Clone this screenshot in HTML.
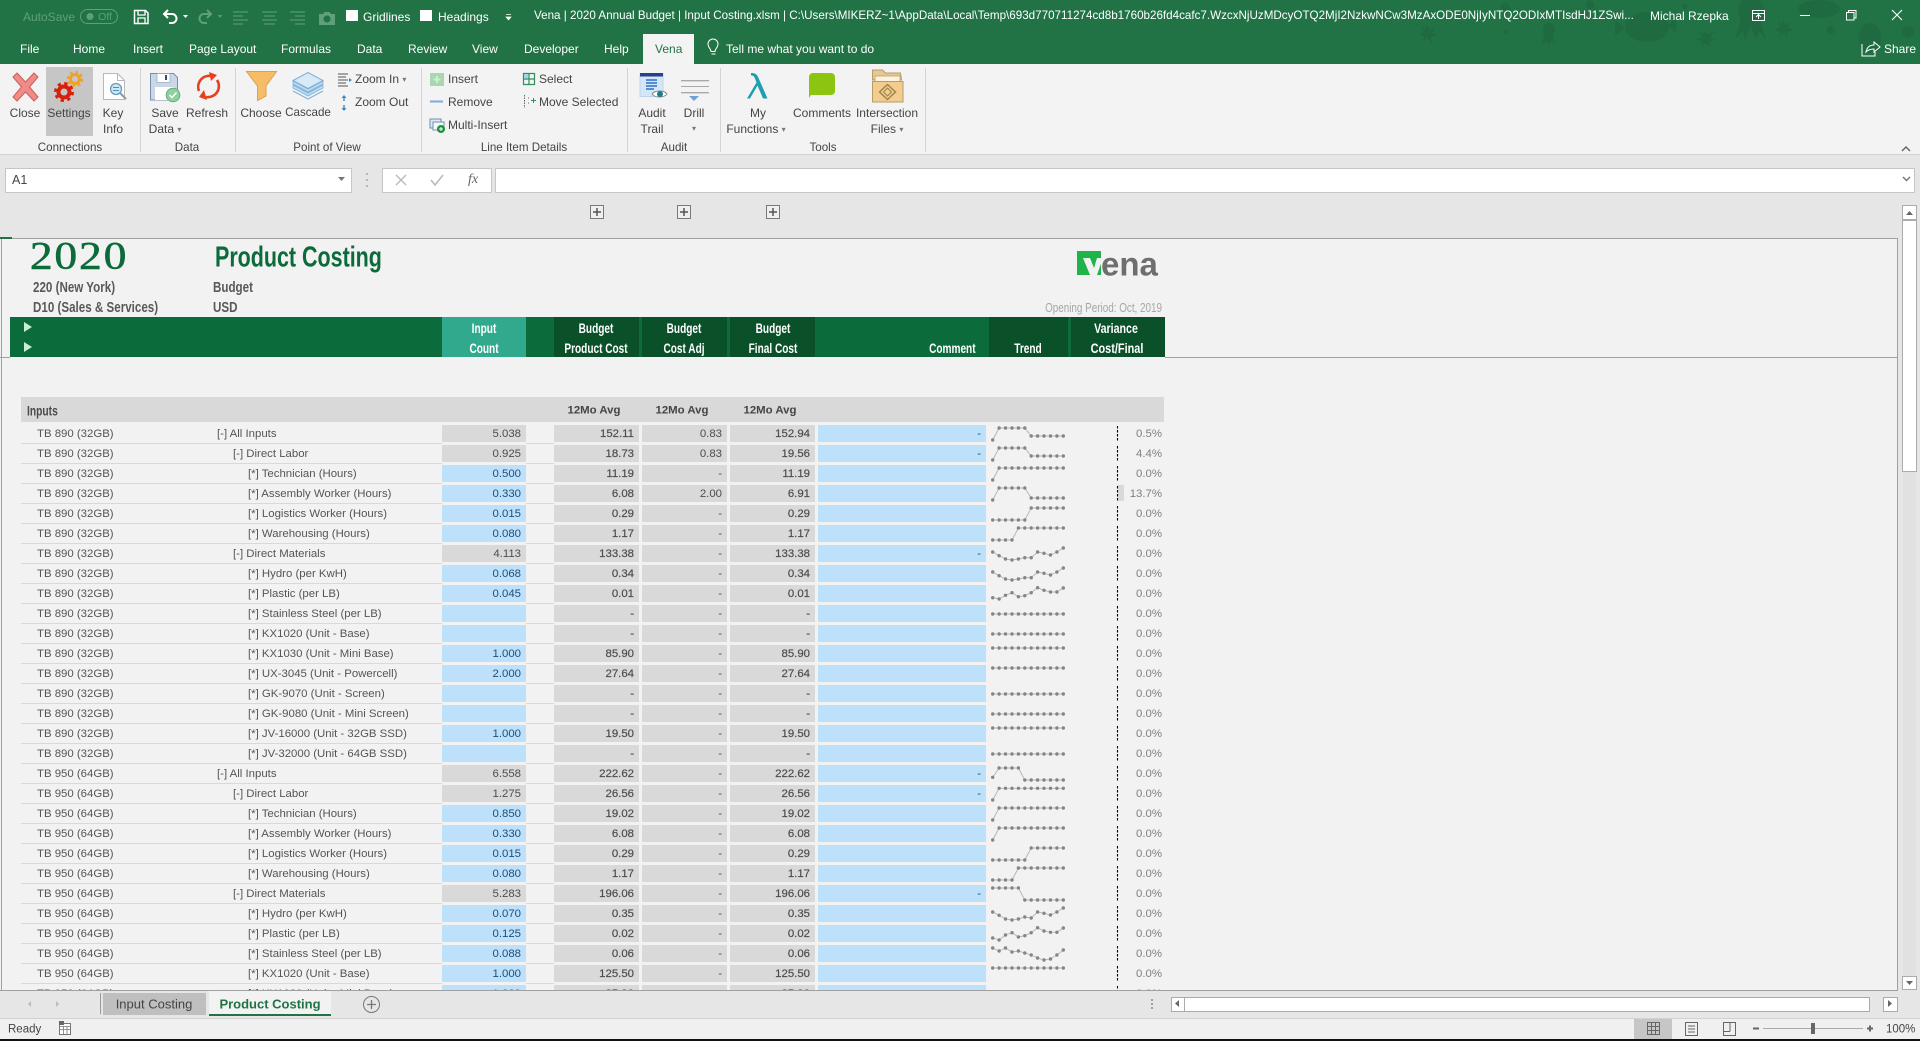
<!DOCTYPE html>
<html><head><meta charset="utf-8"><title>Vena</title>
<style>
html,body{margin:0;padding:0;width:1920px;height:1041px;overflow:hidden;background:#e6e6e6;font-family:"Liberation Sans",sans-serif;font-size:12px;color:#444}
.p{position:absolute}
.t{position:absolute;white-space:nowrap;transform:translateY(-50%);line-height:1}
.c{position:absolute;white-space:nowrap;transform:translate(-50%,-50%);line-height:1}
.w{color:#fff}
.n{font-weight:bold}
.t.n{transform:translateY(-50%) scaleX(var(--x,.8));transform-origin:0 50%}
.t.n.e{transform-origin:100% 50%}
.c.n{transform:translate(-50%,-50%) scaleX(var(--x,.72))}
.ar{font-size:8px;color:#777;vertical-align:1px}
#sh{position:absolute;left:0;top:238px;width:1897px;height:752px;overflow:hidden;background:#f2f2f2}
#in{position:absolute;left:0;top:-238px;width:1897px;height:1040px}
.r{position:absolute;left:0;width:1170px;height:20px;font-size:11.4px;color:#555}
.r u{position:absolute;left:21px;width:421px;top:19px;height:1px;background:#d9d9d9}
.r s{position:absolute;left:526px;width:28px;top:19px;height:1px;background:#d9d9d9}
.r b,.r i{position:absolute;font-weight:normal;font-style:normal;white-space:nowrap;line-height:20px;top:0}
.a{left:37px}.l0{left:217px}.l1{left:233px}.l2{left:248px}
.r i{top:1px;height:17px;text-align:right;padding-right:5px;box-sizing:border-box;line-height:19px}
.k{left:442px;width:84px}.m{left:554px;width:85px}.o{left:642px;width:85px}.q{left:730px;width:85px}.y{left:818px;width:168px}
.v{left:1120px;width:47px;color:#808080}
.g{background:#d9d9d9;color:#4d4d4d}.h{background:#bde0fb;color:#1f4e79}
.m,.q{-webkit-text-stroke:.2px #4d4d4d}
.sp polyline{fill:none;stroke:#b4b4b4;stroke-width:.9;marker-start:url(#m);marker-mid:url(#m);marker-end:url(#m)}
.hd{position:absolute;top:317px;height:40px}
</style></head><body>

<div class="p" style="left:0;top:0;width:1920px;height:64px;background:#217346"></div>
<div class="p" style="left:643px;top:34px;width:51px;height:30px;background:#f3f3f3"></div>
<div class="p" style="left:0;top:64px;width:1920px;height:90px;background:#f3f3f3;border-bottom:1px solid #d2d2d2"></div>
<div class="p" style="left:46px;top:67px;width:47px;height:69px;background:#c6c6c6"></div>
<div class="p" style="left:5px;top:168px;width:345px;height:23px;background:#fff;border:1px solid #c6c6c6"></div>
<div class="p" style="left:382px;top:168px;width:108px;height:23px;background:#fff;border:1px solid #c6c6c6"></div>
<div class="p" style="left:495px;top:168px;width:1418px;height:23px;background:#fff;border:1px solid #c6c6c6"></div>

<svg class="p" style="left:0;top:0" width="1920" height="1041" viewBox="0 0 1920 1041" fill="none">
<g fill="#1f6a41">
<ellipse cx="1647" cy="27" rx="22" ry="15"/><path d="M1625 28l-10-8v16zM1668 25l8-6v14z"/>
<ellipse cx="1751" cy="11" rx="13" ry="14"/><path d="M1741 20l-6 19 8-8 2 9 6-14 5 14 3-9 7 8-6-19z"/>
<ellipse cx="1819" cy="9" rx="21" ry="9"/><ellipse cx="1870" cy="38" rx="11" ry="15"/>
<ellipse cx="1549" cy="30" rx="6" ry="7"/><path d="M1544 34l-2 11 4-4 3 4 3-4 3 4-2-11z"/>
<path d="M1427 24l3 6 5-3-3 6 6 2-7 2 1 6-5-5-4 4 1-6-6-1 6-3-3-5 5 2z"/>
<path d="M1705 30l3 5 5-3-3 6 6 2-7 2 1 5-5-4-4 4 1-6-6-1 6-3-3-5 5 2z"/>
<path d="M1783 20l3 5 5-3-3 6 6 2-7 2 1 5-5-4-4 4 1-6-6-1 6-3-3-5 5 2z"/>
<circle cx="1831" cy="30" r="4"/><circle cx="1505" cy="8" r="5"/><circle cx="1590" cy="5" r="4"/><circle cx="1685" cy="6" r="3"/><circle cx="1908" cy="32" r="6"/><circle cx="1505" cy="32" r="2"/>
</g>
<rect x="80.5" y="9.5" width="37" height="14" rx="7" stroke="#5f9f7c"/><circle cx="90" cy="16.5" r="3.5" fill="#5f9f7c"/>
<path d="M134.5 10.5h11l2.5 2.5v10.500h-13.500z" stroke="#fff" stroke-width="1.500"/><path d="M138 11v4h7v-4M138 23v-5h7v5" stroke="#fff" stroke-width="1.300"/>
<path d="M165 14h7a4.500 4.500 0 0 1 0 9h-3M168 10l-4 4 4 4" stroke="#fff" stroke-width="2"/><path d="M183 15h5l-2.500 3z" fill="#fff"/>
<path d="M210 14h-6a4.500 4.500 0 0 0 0 9h3M207 10l4 4-4 4" stroke="#5f9f7c" stroke-width="2"/><path d="M218 15h4l-2 3z" fill="#5f9f7c"/>
<path d="M233 12h15M233 16h10M233 20h15M233 24h10M262 12h15M264 16h11M262 20h15M264 24h11M290 12h15M295 16h10M290 20h15M295 24h10" stroke="#5f9f7c"/>
<path d="M319 14h4l1.500-2h5l1.500 2h4v11h-16z" fill="#5f9f7c"/><circle cx="327" cy="19" r="3.500" fill="#217346"/>
<rect x="346" y="10" width="12" height="11" fill="#fff"/><rect x="420" y="10" width="12" height="11" fill="#fff"/>
<path d="M506 14.500h5M506 17h5l-2.500 3z" stroke="#fff" fill="#fff" stroke-width=".7"/>
<path d="M1752.500 10.500h12v10h-12zM1752.500 13.500h12M1758.500 19v-4M1756 17l2.500-2.500 2.500 2.500" stroke="#fff"/>
<path d="M1800 15.500h10" stroke="#fff"/><path d="M1846.500 12.500h7.500v7.500h-7.500zM1848.500 12.500v-2h7.500v7.500h-2" stroke="#fff"/><path d="M1892 10l10 10M1902 10l-10 10" stroke="#fff" stroke-width="1.100"/>
<path d="M712 54h4M712.500 51.500h3c0-3 3-3.500 3-7.500a5 5 0 0 0-10 0c0 4 3 4.500 3 7.500z" stroke="#fff" transform="translate(-.500 0)"/>
<path d="M1862 44v12h13v-4M1866 52c1-5 4-7 8-7v-3l6 5-6 5v-3c-3 0-6 1-8 3z" stroke="#fff"/>
<path d="M140.500 68v84M235.500 68v84M421.500 68v84M627.500 68v84M720.500 68v84M925.500 68v84" stroke="#d4d4d4"/>
<path d="M17 73l8.500 9 8.500-9 4 4-8.500 10 8.500 10-4 4-8.500-9-8.500 9-4-4 8.500-10-8.500-10z" fill="#f28b86" stroke="#c75f5f"/>
<circle cx="64" cy="92" r="5.500" stroke="#d8200a" stroke-width="4"/><circle cx="64" cy="92" r="8.500" stroke="#d8200a" stroke-width="3" stroke-dasharray="3.300 3.370"/>
<circle cx="75" cy="79" r="4.500" stroke="#eda32b" stroke-width="3"/><circle cx="75" cy="79" r="7" stroke="#eda32b" stroke-width="2.500" stroke-dasharray="2.700 2.800"/>
<path d="M103.500 73.500h14l7 7v19h-21z" fill="#fff" stroke="#b8b8b8"/><path d="M117.500 73.500v7h7" stroke="#b8b8b8"/>
<circle cx="116" cy="89" r="5.500" fill="#cfe6f3" stroke="#6a9cbc" stroke-width="1.300"/><path d="M120 93l6 6" stroke="#8a9aa6" stroke-width="2"/><path d="M113 87.500h6M113 90.500h6" stroke="#4a90c0"/>
<path d="M150.500 73.500h23l4 4v22.500h-27z" fill="#c9d7e8" stroke="#7a8ea8"/><rect x="157" y="73.500" width="13" height="9" fill="#fff" stroke="#8a9cb4" stroke-width=".6"/><rect x="165" y="75" width="2" height="5" fill="#3c4c60"/><rect x="155" y="87" width="19" height="13" fill="#fff"/>
<circle cx="173" cy="95" r="6.800" fill="#8fd0a0" stroke="#68ab7b"/><path d="M169.500 95l2.500 2.500 4.500-5" stroke="#fff" stroke-width="1.500"/>
<path d="M199 91a11 11 0 0 1 12-15M217 80a11 11 0 0 1-11 17" stroke="#e8401c" stroke-width="2.600"/><path d="M209 72l8 3-6 6zM207 100l-8-3 5-7z" fill="#e8401c"/>
<path d="M246.500 71.500h30l-10.500 14.500v10l-8.500 4.500v-14.500z" fill="#f6bc66" stroke="#d9a152"/>
<path d="M293 88l15 8 15-8v-3l-15 8-15-8zM293 84l15 8 15-8v-3l-15 8-15-8z" fill="#bcdaf0" stroke="#7fb1d8" stroke-width=".8"/><path d="M293 91l15 8 15-8" stroke="#7fb1d8"/><path d="M293 80.500l15-8 15 8-15 8z" fill="#d8eaf7" stroke="#7fb1d8"/>
<path d="M338 74h10M338 77h8M338 80h10M338 83h8M338 86h10" stroke="#555"/><path d="M349 78l3 2-3 2z" fill="#3f88c5"/>
<path d="M344 96v5M344 105v5" stroke="#3f88c5" stroke-width="1.400"/><path d="M341.500 98l2.500-3 2.500 3zM341.500 108l2.500 3 2.500-3z" fill="#3f88c5"/>
<rect x="430" y="73" width="14" height="13" fill="#a8d8b2"/><path d="M437 76v7M433.500 79.500h7" stroke="#cfeed6" stroke-width="2"/>
<path d="M430 101.500h13" stroke="#7fa8e0" stroke-width="2"/>
<rect x="430" y="119" width="11" height="9" fill="#dbe9f5" stroke="#6f8fa8"/><rect x="433" y="122" width="11" height="8" fill="#f5f9fc" stroke="#6f8fa8"/><circle cx="441" cy="129" r="4" fill="#209040"/><path d="M441 127v4M439 129h4" stroke="#fff"/>
<path d="M523.500 73.500h11v11h-11zM529 73.500v11M523.500 79h11" stroke="#2f8f5a" stroke-width="1.200"/><rect x="524" y="74" width="4.500" height="4.500" fill="#a4d4ea"/>
<path d="M524.500 95v13" stroke="#666" stroke-dasharray="1.500 1"/><path d="M528 98h1M528 103h1" stroke="#666"/><path d="M533.500 98v5M531 100.500h5" stroke="#2f8f5a"/>
<rect x="640" y="73.500" width="23" height="23" fill="#d3e7f8" stroke="#bcd4ea"/><rect x="640" y="73" width="23" height="3.500" fill="#26408b"/><path d="M646 80h11M646 83h11M646 86h11M646 89h8" stroke="#2f6fc5" stroke-width="1.500"/>
<path d="M652 94c3-4 12-4 15 0-3 4-12 4-15 0z" fill="#fff" stroke="#888"/><circle cx="660" cy="94" r="3" fill="#1a7f8c"/>
<path d="M681 80.500h28M681 86.500h28M681 92.500h28" stroke="#a8a8a8"/><path d="M681 81.500h28M681 93.500h28" stroke="#d8d8d8"/><path d="M689 96h10l-5 5z" fill="#6fa3d6"/>
<path d="M751 73c4 0 6 1 7.500 5l9 20.500h-4.500l-5.500-13-7.500 13h-3l9.500-16-1.500-4c-1-2.500-2-3-4-3z" fill="#1e9fb0"/>
<path d="M813 73h18a4 4 0 0 1 4 4v14a4 4 0 0 1-4 4h-20l-2 3v-21a4 4 0 0 1 4-4z" fill="#8cc511"/>
<path d="M872.500 70l10 0 3 3h15l1 7h-29z" fill="#e7c890" stroke="#b59c6c"/><path d="M875 76h25v6h-25z" fill="#fdf3df" stroke="#b59c6c" stroke-width=".7"/>
<path d="M872.500 81.500h30.500v20.500h-30.500z" fill="#f4cd8e" stroke="#b59c6c"/><path d="M887.500 84.500l8 7.500-8 7.500-8-7.500z" stroke="#9a8250" stroke-width="1.400"/><path d="M887.500 88l4 4-4 4-4-4z" stroke="#9a8250"/>
<path d="M1902 151l4-4 4 4" stroke="#666" stroke-width="1.500"/><path d="M1903 177l3.500 3.500 3.500-3.500" stroke="#777" stroke-width="1.500"/>
<path d="M338 177h7l-3.500 4z" fill="#777"/>
<circle cx="367" cy="174" r="1" fill="#aaa"/><circle cx="367" cy="180" r="1" fill="#aaa"/><circle cx="367" cy="186" r="1" fill="#aaa"/>
<path d="M396 175l10 10M406 175l-10 10" stroke="#b8b8b8" stroke-width="1.300"/><path d="M431 180l4 5 8-10" stroke="#b8b8b8" stroke-width="1.500"/>
<g stroke="#7a7a7a" fill="#efefef"><rect x="590.500" y="205.500" width="13" height="13"/><rect x="677.500" y="205.500" width="13" height="13"/><rect x="766.500" y="205.500" width="13" height="13"/></g>
<path d="M593 212h8M597 208v8M680 212h8M684 208v8M769 212h8M773 208v8" stroke="#555" stroke-width="1.500"/>
<rect x="1903" y="205" width="13" height="785" fill="#e1e1e1"/><rect x="1902.500" y="220.500" width="14" height="251" fill="#fff" stroke="#ababab"/>
<rect x="1902.500" y="205.500" width="14" height="14" fill="#fff" stroke="#ababab"/><rect x="1902.500" y="976.500" width="14" height="13" fill="#fff" stroke="#ababab"/>
<path d="M1906 215l3.500-4 3.500 4zM1906 981l3.500 4 3.500-4z" fill="#666"/>
</svg>

<span class="t" style="left:23px;top:17px;color:#5f9f7c">AutoSave</span><span class="c" style="left:105px;top:17px;color:#5f9f7c;font-size:10.500px">Off</span>
<span class="t w" style="left:363px;top:17px">Gridlines</span><span class="t w" style="left:438px;top:17px">Headings</span>
<span class="t w" id="ttl" style="left:534px;top:16px;font-size:11.630px">Vena | 2020 Annual Budget | Input Costing.xlsm | C:\Users\MIKERZ~1\AppData\Local\Temp\693d770711274cd8b1760b26fd4cafc7.WzcxNjUzMDcyOTQ2MjI2NzkwNCw3MzAxODE0NjIyNTQ2ODIxMTIsdHJ1ZSwi...</span>
<span class="t w" style="left:1650px;top:16px">Michal Rzepka</span>
<span class="t w" style="left:20px;top:49px">File</span><span class="t w" style="left:73px;top:49px">Home</span><span class="t w" style="left:133px;top:49px">Insert</span><span class="t w" style="left:189px;top:49px">Page Layout</span><span class="t w" style="left:281px;top:49px">Formulas</span><span class="t w" style="left:357px;top:49px">Data</span><span class="t w" style="left:408px;top:49px">Review</span><span class="t w" style="left:472px;top:49px">View</span><span class="t w" style="left:524px;top:49px">Developer</span><span class="t w" style="left:604px;top:49px">Help</span>
<span class="t" style="left:655px;top:49px;color:#217346">Vena</span><span class="t w" style="left:726px;top:49px">Tell me what you want to do</span><span class="t w" style="left:1884px;top:49px">Share</span>

<span class="c" style="left:25px;top:113px">Close</span><span class="c" style="left:69px;top:113px">Settings</span><span class="c" style="left:113px;top:113px">Key</span><span class="c" style="left:113px;top:129px">Info</span>
<span class="c" style="left:165px;top:113px">Save</span><span class="c" style="left:165px;top:129px">Data <span class="ar">▾</span></span><span class="c" style="left:207px;top:113px">Refresh</span>
<span class="c" style="left:261px;top:113px">Choose</span><span class="c" style="left:308px;top:113px;font-size:11.600px">Cascade</span>
<span class="t" style="left:355px;top:79px">Zoom In <span class="ar">▾</span></span><span class="t" style="left:355px;top:102px">Zoom Out</span>
<span class="t" style="left:448px;top:79px">Insert</span><span class="t" style="left:448px;top:102px">Remove</span><span class="t" style="left:448px;top:125px">Multi-Insert</span><span class="t" style="left:539px;top:79px">Select</span><span class="t" style="left:539px;top:102px">Move Selected</span>
<span class="c" style="left:652px;top:113px">Audit</span><span class="c" style="left:652px;top:129px">Trail</span><span class="c" style="left:694px;top:113px">Drill</span><span class="c ar" style="left:694px;top:129px">▾</span>
<span class="c" style="left:758px;top:113px">My</span><span class="c" style="left:756px;top:129px">Functions <span class="ar">▾</span></span><span class="c" style="left:822px;top:113px">Comments</span><span class="c" style="left:887px;top:113px">Intersection</span><span class="c" style="left:887px;top:129px">Files <span class="ar">▾</span></span>
<span class="c" style="left:70px;top:148px;font-size:11.600px">Connections</span><span class="c" style="left:187px;top:148px;font-size:11.600px">Data</span><span class="c" style="left:327px;top:148px;font-size:11.600px">Point of View</span><span class="c" style="left:524px;top:148px;font-size:11.600px">Line Item Details</span><span class="c" style="left:674px;top:148px;font-size:11.600px">Audit</span><span class="c" style="left:823px;top:148px;font-size:11.600px">Tools</span>
<span class="t" style="left:12px;top:180px;font-size:12.500px">A1</span>
<span class="c" style="left:473px;top:180px;font-family:'Liberation Serif',serif;font-style:italic;font-size:14px;color:#666">fx</span>

<div id="sh"><div id="in">
<div class="c" style="left:78.500px;top:256px;font-family:'Liberation Serif',serif;font-size:39px;color:#0b6b3a;letter-spacing:1.500px;transform:translate(-50%,-50%) scaleX(1.17);-webkit-text-stroke:.5px #0b6b3a">2020</div>
<div class="t n" style="left:215px;top:258px;font-size:29px;color:#0b6b3a;--x:.74">Product Costing</div>
<div class="t n" style="left:33px;top:288px;font-size:14.500px;color:#595959">220 (New York)</div>
<div class="t n" style="left:33px;top:308px;font-size:14.500px;color:#595959">D10 (Sales &amp; Services)</div>
<div class="t n" style="left:213px;top:288px;font-size:14.500px;color:#595959">Budget</div>
<div class="t n" style="left:213px;top:308px;font-size:14.500px;color:#595959">USD</div>
<div class="p" style="left:1077px;top:251px;width:24px;height:24px;background:#21b34b"></div>
<svg class="p" style="left:1077px;top:251px" width="30" height="24"><path d="M6 7h7l4 10 3-10h6l-6 17h-7z" fill="#f2f2f2"/></svg>
<div class="t" style="left:1101px;top:263.500px;font-size:33px;font-weight:bold;color:#6e6e6e">ena</div>
<div class="t n e" style="right:735px;top:308px;font-size:12.500px;font-weight:normal;color:#a6a6a6;--x:.79">Opening Period: Oct, 2019</div>

<div class="hd" style="left:10px;width:1155px;background:#0b6b3a"></div>
<div class="hd" style="left:442px;width:84px;background:#31a98c"></div>
<div class="hd" style="left:554px;width:85px;background:#0a5129"></div>
<div class="hd" style="left:642px;width:85px;background:#0a5129"></div>
<div class="hd" style="left:730px;width:85px;background:#0a5129"></div>
<div class="hd" style="left:989px;width:79px;background:#0a5129"></div>
<div class="hd" style="left:1071px;width:94px;background:#0a5129"></div>
<div class="p" style="left:0;top:357px;width:10px;height:1px;background:#a0a0a0"></div>
<div class="p" style="left:1165px;top:357px;width:732px;height:1px;background:#a0a0a0"></div>
<svg class="p" style="left:23px;top:321px" width="10" height="32"><path d="M1 1l8 5-8 5zM1 21l8 5-8 5z" fill="#c9efcf"/></svg>
<div class="c n w" style="left:484px;top:328px;font-size:14px">Input</div><div class="c n w" style="left:484px;top:348px;font-size:14px">Count</div>
<div class="c n w" style="left:596px;top:328px;font-size:14px">Budget</div><div class="c n w" style="left:596px;top:348px;font-size:14px">Product Cost</div>
<div class="c n w" style="left:684px;top:328px;font-size:14px">Budget</div><div class="c n w" style="left:684px;top:348px;font-size:14px">Cost Adj</div>
<div class="c n w" style="left:773px;top:328px;font-size:14px">Budget</div><div class="c n w" style="left:773px;top:348px;font-size:14px">Final Cost</div>
<div class="t n e w" style="right:921px;top:348px;font-size:14px;--x:.72">Comment</div>
<div class="c n w" style="left:1028px;top:348px;font-size:14px">Trend</div>
<div class="c n w" style="left:1116px;top:328px;font-size:14px;--x:.76">Variance</div><div class="c n w" style="left:1117px;top:348px;font-size:14px;--x:.78">Cost/Final</div>

<div class="p" style="left:21px;top:397px;width:1143px;height:25px;background:#d9d9d9"></div>
<div class="t n" style="left:27px;top:411px;font-size:13.500px;color:#4a4a4a;--x:.76">Inputs</div>
<div class="c" style="left:594px;top:411px;font-size:11.400px;font-weight:bold;color:#444">12Mo Avg</div>
<div class="c" style="left:682px;top:411px;font-size:11.400px;font-weight:bold;color:#444">12Mo Avg</div>
<div class="c" style="left:770px;top:411px;font-size:11.400px;font-weight:bold;color:#444">12Mo Avg</div>
<div class="p" style="left:1118px;top:485px;width:6px;height:16px;background:#d9d9d9"></div>

<div class="r" style="top:424px"><u></u><s></s><b class="a">TB 890 (32GB)</b><b class="l0">[-] All Inputs</b><i class="k g">5.038</i><i class="m g">152.11</i><i class="o g">0.83</i><i class="q g">152.94</i><i class="y h">-</i><i class="v">0.5%</i></div>
<div class="r" style="top:444px"><u></u><s></s><b class="a">TB 890 (32GB)</b><b class="l1">[-] Direct Labor</b><i class="k g">0.925</i><i class="m g">18.73</i><i class="o g">0.83</i><i class="q g">19.56</i><i class="y h">-</i><i class="v">4.4%</i></div>
<div class="r" style="top:464px"><u></u><s></s><b class="a">TB 890 (32GB)</b><b class="l2">[*] Technician (Hours)</b><i class="k h">0.500</i><i class="m g">11.19</i><i class="o g">-</i><i class="q g">11.19</i><i class="y h"></i><i class="v">0.0%</i></div>
<div class="r" style="top:484px"><u></u><s></s><b class="a">TB 890 (32GB)</b><b class="l2">[*] Assembly Worker (Hours)</b><i class="k h">0.330</i><i class="m g">6.08</i><i class="o g">2.00</i><i class="q g">6.91</i><i class="y h"></i><i class="v">13.7%</i></div>
<div class="r" style="top:504px"><u></u><s></s><b class="a">TB 890 (32GB)</b><b class="l2">[*] Logistics Worker (Hours)</b><i class="k h">0.015</i><i class="m g">0.29</i><i class="o g">-</i><i class="q g">0.29</i><i class="y h"></i><i class="v">0.0%</i></div>
<div class="r" style="top:524px"><u></u><s></s><b class="a">TB 890 (32GB)</b><b class="l2">[*] Warehousing (Hours)</b><i class="k h">0.080</i><i class="m g">1.17</i><i class="o g">-</i><i class="q g">1.17</i><i class="y h"></i><i class="v">0.0%</i></div>
<div class="r" style="top:544px"><u></u><s></s><b class="a">TB 890 (32GB)</b><b class="l1">[-] Direct Materials</b><i class="k g">4.113</i><i class="m g">133.38</i><i class="o g">-</i><i class="q g">133.38</i><i class="y h">-</i><i class="v">0.0%</i></div>
<div class="r" style="top:564px"><u></u><s></s><b class="a">TB 890 (32GB)</b><b class="l2">[*] Hydro (per KwH)</b><i class="k h">0.068</i><i class="m g">0.34</i><i class="o g">-</i><i class="q g">0.34</i><i class="y h"></i><i class="v">0.0%</i></div>
<div class="r" style="top:584px"><u></u><s></s><b class="a">TB 890 (32GB)</b><b class="l2">[*] Plastic (per LB)</b><i class="k h">0.045</i><i class="m g">0.01</i><i class="o g">-</i><i class="q g">0.01</i><i class="y h"></i><i class="v">0.0%</i></div>
<div class="r" style="top:604px"><u></u><s></s><b class="a">TB 890 (32GB)</b><b class="l2">[*] Stainless Steel (per LB)</b><i class="k h"></i><i class="m g">-</i><i class="o g">-</i><i class="q g">-</i><i class="y h"></i><i class="v">0.0%</i></div>
<div class="r" style="top:624px"><u></u><s></s><b class="a">TB 890 (32GB)</b><b class="l2">[*] KX1020 (Unit - Base)</b><i class="k h"></i><i class="m g">-</i><i class="o g">-</i><i class="q g">-</i><i class="y h"></i><i class="v">0.0%</i></div>
<div class="r" style="top:644px"><u></u><s></s><b class="a">TB 890 (32GB)</b><b class="l2">[*] KX1030 (Unit - Mini Base)</b><i class="k h">1.000</i><i class="m g">85.90</i><i class="o g">-</i><i class="q g">85.90</i><i class="y h"></i><i class="v">0.0%</i></div>
<div class="r" style="top:664px"><u></u><s></s><b class="a">TB 890 (32GB)</b><b class="l2">[*] UX-3045 (Unit - Powercell)</b><i class="k h">2.000</i><i class="m g">27.64</i><i class="o g">-</i><i class="q g">27.64</i><i class="y h"></i><i class="v">0.0%</i></div>
<div class="r" style="top:684px"><u></u><s></s><b class="a">TB 890 (32GB)</b><b class="l2">[*] GK-9070 (Unit - Screen)</b><i class="k h"></i><i class="m g">-</i><i class="o g">-</i><i class="q g">-</i><i class="y h"></i><i class="v">0.0%</i></div>
<div class="r" style="top:704px"><u></u><s></s><b class="a">TB 890 (32GB)</b><b class="l2">[*] GK-9080 (Unit - Mini Screen)</b><i class="k h"></i><i class="m g">-</i><i class="o g">-</i><i class="q g">-</i><i class="y h"></i><i class="v">0.0%</i></div>
<div class="r" style="top:724px"><u></u><s></s><b class="a">TB 890 (32GB)</b><b class="l2">[*] JV-16000 (Unit - 32GB SSD)</b><i class="k h">1.000</i><i class="m g">19.50</i><i class="o g">-</i><i class="q g">19.50</i><i class="y h"></i><i class="v">0.0%</i></div>
<div class="r" style="top:744px"><u></u><s></s><b class="a">TB 890 (32GB)</b><b class="l2">[*] JV-32000 (Unit - 64GB SSD)</b><i class="k h"></i><i class="m g">-</i><i class="o g">-</i><i class="q g">-</i><i class="y h"></i><i class="v">0.0%</i></div>
<div class="r" style="top:764px"><u></u><s></s><b class="a">TB 950 (64GB)</b><b class="l0">[-] All Inputs</b><i class="k g">6.558</i><i class="m g">222.62</i><i class="o g">-</i><i class="q g">222.62</i><i class="y h">-</i><i class="v">0.0%</i></div>
<div class="r" style="top:784px"><u></u><s></s><b class="a">TB 950 (64GB)</b><b class="l1">[-] Direct Labor</b><i class="k g">1.275</i><i class="m g">26.56</i><i class="o g">-</i><i class="q g">26.56</i><i class="y h">-</i><i class="v">0.0%</i></div>
<div class="r" style="top:804px"><u></u><s></s><b class="a">TB 950 (64GB)</b><b class="l2">[*] Technician (Hours)</b><i class="k h">0.850</i><i class="m g">19.02</i><i class="o g">-</i><i class="q g">19.02</i><i class="y h"></i><i class="v">0.0%</i></div>
<div class="r" style="top:824px"><u></u><s></s><b class="a">TB 950 (64GB)</b><b class="l2">[*] Assembly Worker (Hours)</b><i class="k h">0.330</i><i class="m g">6.08</i><i class="o g">-</i><i class="q g">6.08</i><i class="y h"></i><i class="v">0.0%</i></div>
<div class="r" style="top:844px"><u></u><s></s><b class="a">TB 950 (64GB)</b><b class="l2">[*] Logistics Worker (Hours)</b><i class="k h">0.015</i><i class="m g">0.29</i><i class="o g">-</i><i class="q g">0.29</i><i class="y h"></i><i class="v">0.0%</i></div>
<div class="r" style="top:864px"><u></u><s></s><b class="a">TB 950 (64GB)</b><b class="l2">[*] Warehousing (Hours)</b><i class="k h">0.080</i><i class="m g">1.17</i><i class="o g">-</i><i class="q g">1.17</i><i class="y h"></i><i class="v">0.0%</i></div>
<div class="r" style="top:884px"><u></u><s></s><b class="a">TB 950 (64GB)</b><b class="l1">[-] Direct Materials</b><i class="k g">5.283</i><i class="m g">196.06</i><i class="o g">-</i><i class="q g">196.06</i><i class="y h">-</i><i class="v">0.0%</i></div>
<div class="r" style="top:904px"><u></u><s></s><b class="a">TB 950 (64GB)</b><b class="l2">[*] Hydro (per KwH)</b><i class="k h">0.070</i><i class="m g">0.35</i><i class="o g">-</i><i class="q g">0.35</i><i class="y h"></i><i class="v">0.0%</i></div>
<div class="r" style="top:924px"><u></u><s></s><b class="a">TB 950 (64GB)</b><b class="l2">[*] Plastic (per LB)</b><i class="k h">0.125</i><i class="m g">0.02</i><i class="o g">-</i><i class="q g">0.02</i><i class="y h"></i><i class="v">0.0%</i></div>
<div class="r" style="top:944px"><u></u><s></s><b class="a">TB 950 (64GB)</b><b class="l2">[*] Stainless Steel (per LB)</b><i class="k h">0.088</i><i class="m g">0.06</i><i class="o g">-</i><i class="q g">0.06</i><i class="y h"></i><i class="v">0.0%</i></div>
<div class="r" style="top:964px"><u></u><s></s><b class="a">TB 950 (64GB)</b><b class="l2">[*] KX1020 (Unit - Base)</b><i class="k h">1.000</i><i class="m g">125.50</i><i class="o g">-</i><i class="q g">125.50</i><i class="y h"></i><i class="v">0.0%</i></div>
<div class="r" style="top:984px"><b class="a">TB 950 (64GB)</b><b class="l2">[*] KX1030 (Unit - Mini Base)</b><i class="k h">1.000</i><i class="m g">85.90</i><i class="o g">-</i><i class="q g">85.90</i><i class="y h"></i><i class="v">0.0%</i></div>

<svg class="p sp" style="left:0;top:0" width="1200" height="1000" viewBox="0 0 1200 1000">
<defs><marker id="m" markerWidth="4" markerHeight="4" refX="2" refY="2" markerUnits="userSpaceOnUse"><circle cx="2" cy="2" r="1.700" fill="#858585"/></marker></defs>
<polyline points="992.7,440 999.1,428 1005.5,428 1012,428 1018.4,428 1024.8,428 1031.2,436 1037.6,436 1044,436 1050.5,436 1056.9,436 1063.3,436"/>
<polyline points="992.7,460 999.1,448 1005.5,448 1012,448 1018.4,448 1024.8,448 1031.2,456 1037.6,456 1044,456 1050.5,456 1056.9,456 1063.3,456"/>
<polyline points="992.7,480 999.1,468 1005.5,468 1012,468 1018.4,468 1024.8,468 1031.2,468 1037.6,468 1044,468 1050.5,468 1056.9,468 1063.3,468"/>
<polyline points="992.7,500 999.1,488 1005.5,488 1012,488 1018.4,488 1024.8,488 1031.2,498 1037.6,498 1044,498 1050.5,498 1056.9,498 1063.3,498"/>
<polyline points="992.7,520 999.1,520 1005.5,520 1012,520 1018.4,520 1024.8,520 1031.2,508 1037.6,508 1044,508 1050.5,508 1056.9,508 1063.3,508"/>
<polyline points="992.7,540 999.1,540 1005.5,540 1012,540 1018.4,528 1024.8,528 1031.2,528 1037.6,528 1044,528 1050.5,528 1056.9,528 1063.3,528"/>
<polyline points="992.7,552 999.1,555.7 1005.5,559 1012,560 1018.4,559 1024.8,557.7 1031.2,557.7 1037.6,552 1044,553.3 1050.5,555 1056.9,552 1063.3,548"/>
<polyline points="992.7,572 999.1,575.7 1005.5,579 1012,580 1018.4,579 1024.8,577.7 1031.2,577.7 1037.6,572 1044,573.3 1050.5,575 1056.9,572 1063.3,568"/>
<polyline points="992.7,597.7 999.1,599 1005.5,595.3 1012,592.7 1018.4,596.7 1024.8,595.7 1031.2,592.7 1037.6,587.7 1044,590.3 1050.5,592 1056.9,592 1063.3,588"/>
<polyline points="992.7,614 999.1,614 1005.5,614 1012,614 1018.4,614 1024.8,614 1031.2,614 1037.6,614 1044,614 1050.5,614 1056.9,614 1063.3,614"/>
<polyline points="992.7,634 999.1,634 1005.5,634 1012,634 1018.4,634 1024.8,634 1031.2,634 1037.6,634 1044,634 1050.5,634 1056.9,634 1063.3,634"/>
<polyline points="992.7,648 999.1,648 1005.5,648 1012,648 1018.4,648 1024.8,648 1031.2,648 1037.6,648 1044,648 1050.5,648 1056.9,648 1063.3,648"/>
<polyline points="992.7,668 999.1,668 1005.5,668 1012,668 1018.4,668 1024.8,668 1031.2,668 1037.6,668 1044,668 1050.5,668 1056.9,668 1063.3,668"/>
<polyline points="992.7,694 999.1,694 1005.5,694 1012,694 1018.4,694 1024.8,694 1031.2,694 1037.6,694 1044,694 1050.5,694 1056.9,694 1063.3,694"/>
<polyline points="992.7,714 999.1,714 1005.5,714 1012,714 1018.4,714 1024.8,714 1031.2,714 1037.6,714 1044,714 1050.5,714 1056.9,714 1063.3,714"/>
<polyline points="992.7,728 999.1,728 1005.5,728 1012,728 1018.4,728 1024.8,728 1031.2,728 1037.6,728 1044,728 1050.5,728 1056.9,728 1063.3,728"/>
<polyline points="992.7,754 999.1,754 1005.5,754 1012,754 1018.4,754 1024.8,754 1031.2,754 1037.6,754 1044,754 1050.5,754 1056.9,754 1063.3,754"/>
<polyline points="992.7,777.3 999.1,768 1005.5,768 1012,768 1018.4,768 1024.8,780 1031.2,780 1037.6,780 1044,780 1050.5,780 1056.9,780 1063.3,780"/>
<polyline points="992.7,800 999.1,788.3 1005.5,788.3 1012,788.3 1018.4,788.3 1024.8,788.3 1031.2,788.3 1037.6,788.3 1044,788.3 1050.5,788.3 1056.9,788.3 1063.3,788.3"/>
<polyline points="992.7,820 999.1,808 1005.5,808 1012,808 1018.4,808 1024.8,808 1031.2,808 1037.6,808 1044,808 1050.5,808 1056.9,808 1063.3,808"/>
<polyline points="992.7,840 999.1,828 1005.5,828 1012,828 1018.4,828 1024.8,828 1031.2,828 1037.6,828 1044,828 1050.5,828 1056.9,828 1063.3,828"/>
<polyline points="992.7,860 999.1,860 1005.5,860 1012,860 1018.4,860 1024.8,860 1031.2,848 1037.6,848 1044,848 1050.5,848 1056.9,848 1063.3,848"/>
<polyline points="992.7,880 999.1,880 1005.5,880 1012,880 1018.4,868 1024.8,868 1031.2,868 1037.6,868 1044,868 1050.5,868 1056.9,868 1063.3,868"/>
<polyline points="992.7,888 999.1,888 1005.5,888 1012,888 1018.4,888 1024.8,900 1031.2,900 1037.6,900 1044,900 1050.5,900 1056.9,900 1063.3,900"/>
<polyline points="992.7,912 999.1,915.3 1005.5,919 1012,920 1018.4,919 1024.8,917 1031.2,918 1037.6,912 1044,913.3 1050.5,915 1056.9,912 1063.3,908"/>
<polyline points="992.7,938 999.1,940 1005.5,935 1012,932.7 1018.4,937 1024.8,935.7 1031.2,932.7 1037.6,927.7 1044,931 1050.5,932.3 1056.9,932.3 1063.3,928"/>
<polyline points="992.7,948 999.1,951 1005.5,948 1012,952 1018.4,951 1024.8,953 1031.2,955 1037.6,958 1044,960 1050.5,959 1056.9,955 1063.3,950"/>
<polyline points="992.7,968 999.1,968 1005.5,968 1012,968 1018.4,968 1024.8,968 1031.2,968 1037.6,968 1044,968 1050.5,968 1056.9,968 1063.3,968"/>
<path d="M1117.500 426V442M1117.500 446V462M1117.500 466V482M1117.500 486V502M1117.500 506V522M1117.500 526V542M1117.500 546V562M1117.500 566V582M1117.500 586V602M1117.500 606V622M1117.500 626V642M1117.500 646V662M1117.500 666V682M1117.500 686V702M1117.500 706V722M1117.500 726V742M1117.500 746V762M1117.500 766V782M1117.500 786V802M1117.500 806V822M1117.500 826V842M1117.500 846V862M1117.500 866V882M1117.500 886V902M1117.500 906V922M1117.500 926V942M1117.500 946V962M1117.500 966V982M1117.500 986V990" stroke="#000" stroke-width="1.100" stroke-dasharray="2.500 1.500" fill="none"/>
</svg>
<div class="p" style="left:1px;top:238px;width:1px;height:752px;background:#a0a0a0"></div>
<div class="p" style="left:0;top:238px;width:1897px;height:1px;background:#a0a0a0"></div>
</div></div>
<div class="p" style="left:0;top:237px;width:12px;height:2px;background:#217346"></div>
<div class="p" style="left:1897px;top:238px;width:1px;height:752px;background:#a0a0a0"></div>
<div class="p" style="left:0;top:990px;width:1898px;height:1px;background:#a0a0a0"></div>

<div class="p" style="left:100px;top:993px;width:1px;height:21px;background:#9a9a9a"></div>
<div class="p" style="left:103px;top:993px;width:103px;height:22px;background:#bfbfbf"></div>
<div class="p" style="left:209px;top:991px;width:122px;height:23px;background:#f2f2f2;border-bottom:2px solid #217346"></div>
<span class="c" style="left:154px;top:1004px;font-size:13px;color:#444">Input Costing</span>
<span class="c" style="left:270px;top:1004px;font-size:13px;font-weight:bold;color:#217346">Product Costing</span>
<div class="p" style="left:1182px;top:997px;width:686px;height:13px;background:#fff;border:1px solid #ababab"></div>
<div class="p" style="left:1171px;top:997px;width:12px;height:13px;background:#fff;border:1px solid #ababab"></div>
<div class="p" style="left:1883px;top:997px;width:13px;height:13px;background:#fff;border:1px solid #ababab"></div>
<div class="p" style="left:0;top:1018px;width:1920px;height:21px;background:#f0f0f0;border-top:1px solid #d2d2d2;box-sizing:border-box"></div>
<div class="p" style="left:1634px;top:1019px;width:38px;height:20px;background:#c6c6c6"></div>
<div class="p" style="left:0;top:1039px;width:1920px;height:2px;background:#111"></div>
<svg class="p" style="left:0;top:990px" width="1920" height="51" viewBox="0 990 1920 51" fill="none">
<path d="M31 1001l-3 3 3 3zM56 1001l3 3-3 3z" fill="#bbb"/>
<circle cx="371.500" cy="1004.500" r="8" stroke="#777"/><path d="M367 1004.500h9M371.500 1000v9" stroke="#777" stroke-width="1.300"/>
<circle cx="1152" cy="1000" r="1" fill="#888"/><circle cx="1152" cy="1004" r="1" fill="#888"/><circle cx="1152" cy="1008" r="1" fill="#888"/>
<path d="M1179 1000l-4 3.500 4 3.500zM1888 1000l4 3.500-4 3.500z" fill="#666"/>
<rect x="59.500" y="1023.500" width="11" height="11" fill="#fff" stroke="#777"/><path d="M59.500 1026.500h11M59.500 1029.500h11M63.500 1026v9M67 1026v9" stroke="#777" stroke-width=".8"/><rect x="59" y="1021" width="5" height="4" fill="#666"/>
<path d="M1647.500 1022.500h12v12h-12zM1651.500 1022.500v12M1655.500 1022.500v12M1647.500 1026.500h12M1647.500 1030.500h12" stroke="#666"/>
<path d="M1685.500 1022.500h12v13h-12zM1688 1026h7M1688 1029h7M1688 1032h7" stroke="#666"/>
<path d="M1723.500 1022.500h12v13h-12zM1723.500 1031.500h6.500M1730 1022.500v9" stroke="#666"/>
<path d="M1753 1028.500h6" stroke="#666" stroke-width="2"/><path d="M1763 1028.500h100" stroke="#aaa"/><rect x="1811" y="1023" width="4" height="11" fill="#666"/>
<path d="M1867 1028.500h6M1870 1025.500v6" stroke="#666" stroke-width="2"/>
</svg>
<span class="t" style="left:8px;top:1029.500px;font-size:11.500px">Ready</span>
<span class="t" style="left:1886px;top:1029.500px;font-size:11.500px">100%</span>
</body></html>
